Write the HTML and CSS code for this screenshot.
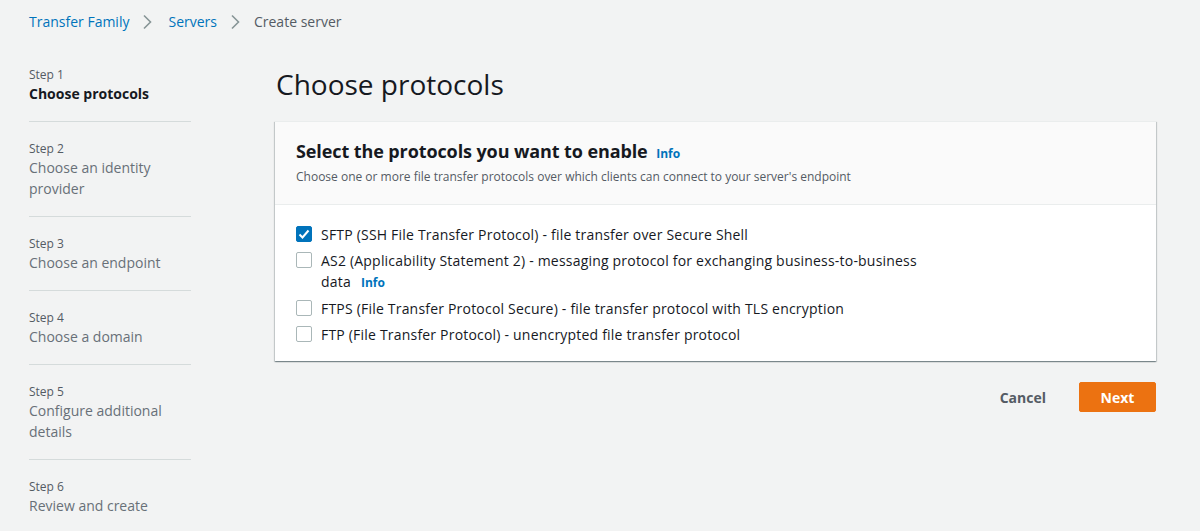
FILE: index.html
```html
<!DOCTYPE html>
<html>
<head>
<meta charset="utf-8">
<link rel="stylesheet" href="styles.css">
</head>
<body>
<nav class="breadcrumb">
  <a class="crumb link">Transfer Family</a>
  <svg class="chev" width="10" height="16" viewBox="0 0 10 16"><path d="M2 1.5 L8.5 8 L2 14.5" fill="none" stroke="#879596" stroke-width="1.6"/></svg>
  <a class="crumb link">Servers</a>
  <svg class="chev" width="10" height="16" viewBox="0 0 10 16"><path d="M2 1.5 L8.5 8 L2 14.5" fill="none" stroke="#879596" stroke-width="1.6"/></svg>
  <span class="crumb current">Create server</span>
</nav>
<div class="layout">
  <ul class="steps">
    <li class="step active"><span class="step-num">Step 1</span><span class="step-title">Choose protocols</span></li>
    <li class="step"><span class="step-num">Step 2</span><span class="step-title">Choose an identity provider</span></li>
    <li class="step"><span class="step-num">Step 3</span><span class="step-title">Choose an endpoint</span></li>
    <li class="step"><span class="step-num">Step 4</span><span class="step-title">Choose a domain</span></li>
    <li class="step"><span class="step-num">Step 5</span><span class="step-title">Configure additional details</span></li>
    <li class="step"><span class="step-num">Step 6</span><span class="step-title">Review and create</span></li>
  </ul>
  <main class="content">
    <h1 class="page-title">Choose protocols</h1>
    <section class="card">
      <header class="card-header">
        <h2 class="card-title">Select the protocols you want to enable <a class="info">Info</a></h2>
        <p class="card-desc">Choose one or more file transfer protocols over which clients can connect to your server's endpoint</p>
      </header>
      <div class="card-body">
        <label class="option">
          <span class="box checked"><svg width="16" height="16" viewBox="0 0 16 16"><path d="M3.5 8.5 L6.5 11.5 L12.5 4.5" fill="none" stroke="#fff" stroke-width="2"/></svg></span>
          <span class="opt-text">SFTP (SSH File Transfer Protocol) - file transfer over Secure Shell</span>
        </label>
        <label class="option">
          <span class="box"></span>
          <span class="opt-text"><span>AS2 (Applicability Statement 2) - messaging protocol for exchanging business-to-business</span> <span>data</span><a class="info inline">Info</a></span>
        </label>
        <label class="option">
          <span class="box"></span>
          <span class="opt-text">FTPS (File Transfer Protocol Secure) - file transfer protocol with TLS encryption</span>
        </label>
        <label class="option">
          <span class="box"></span>
          <span class="opt-text">FTP (File Transfer Protocol) - unencrypted file transfer protocol</span>
        </label>
      </div>
    </section>
    <div class="actions">
      <button class="btn btn-link">Cancel</button>
      <button class="btn btn-primary">Next</button>
    </div>
  </main>
</div>
</body>
</html>
```
FILE: styles.css
```css
* { box-sizing: border-box; }
html, body { margin: 0; padding: 0; }
body {
  background: #f2f3f3;
  font-family: "Open Sans", "Noto Sans", Arial, sans-serif;
  color: #16191f;
  width: 1200px;
  height: 531px;
  overflow: hidden;
}
.breadcrumb {
  display: flex;
  align-items: center;
  padding: 11px 29px 0;
  height: 32px;
  font-size: 14px;
}
.crumb.link { color: #0073bb; }
.crumb.current { color: #545b64; }
.chev { margin: 0 16px 0 13px; }
.chev + .crumb.current { margin-left: -2px; }
.layout {
  display: flex;
  padding-top: 35px;
}
.steps {
  list-style: none;
  margin: 0;
  padding: 0 0 0 29px;
  width: 191px;
  flex: none;
}
.step {
  display: flex;
  flex-direction: column;
  border-bottom: 1px solid #d5dbdb;
  padding: 19px 0 17px;
}
.step:first-child { padding-top: 0; }
.step:last-child { border-bottom: none; }
.step-num {
  font-size: 12px;
  color: #545b64;
  line-height: 16px;
}
.step-title {
  font-size: 14px;
  line-height: 21px;
  color: #687078;
  margin-top: 0;
}
.step.active .step-title { color: #16191f; font-weight: 700; }
.content {
  margin-left: 84px;
  width: 881px;
}
.page-title {
  font-size: 28px;
  font-weight: 400;
  margin: -2px 0 18px 1px;
  line-height: 38px;
  color: #16191f;
}
.card {
  background: #fff;
  box-shadow: 0 1px 1px 0 rgba(0,28,36,0.3), 1px 1px 1px 0 rgba(0,28,36,0.15), -1px 1px 1px 0 rgba(0,28,36,0.15);
  border-top: 1px solid #eaeded;
}
.card-header {
  background: #fafafa;
  border-bottom: 1px solid #eaeded;
  padding: 17px 20px 18px 21px;
}
.card-title {
  margin: 0;
  font-size: 18px;
  font-weight: 700;
  line-height: 24px;
  letter-spacing: -0.1px;
}
.info {
  color: #0073bb;
  font-size: 12px;
  font-weight: 700;
  margin-left: 4px;
  letter-spacing: 0;
}
.card-desc {
  margin: 2px 0 0;
  font-size: 12px;
  line-height: 18px;
  color: #545b64;
}
.card-body {
  padding: 19px 20px 16px 21px;
  display: flex;
  flex-direction: column;
  gap: 5px;
}
.option {
  display: flex;
  align-items: flex-start;
  font-size: 14px;
  line-height: 21px;
}
.box {
  width: 16px;
  height: 16px;
  border: 1px solid #aab7b8;
  border-radius: 2px;
  background: #fff;
  margin: 2px 9px 0 0;
  flex: none;
  display: flex;
}
.box.checked { background: #0073bb; border-color: #0073bb; }
.box.checked svg { margin: -1px; }
.opt-text { max-width: 610px; letter-spacing: 0.2px; }
.info.inline { display: inline-block; margin-left: 10px; }
.actions {
  display: flex;
  justify-content: flex-end;
  align-items: center;
  margin-top: 21px;
  gap: 12px;
}
.btn {
  font-family: inherit;
  font-size: 14px;
  font-weight: 700;
  border-radius: 2px;
  height: 30px;
  cursor: pointer;
}
.btn-link {
  background: transparent;
  border: 1px solid transparent;
  color: #545b64;
  padding: 0 20px;
}
.btn-primary {
  background: #ec7211;
  border: 1px solid #ec7211;
  color: #fff;
  width: 77px;
}
```
